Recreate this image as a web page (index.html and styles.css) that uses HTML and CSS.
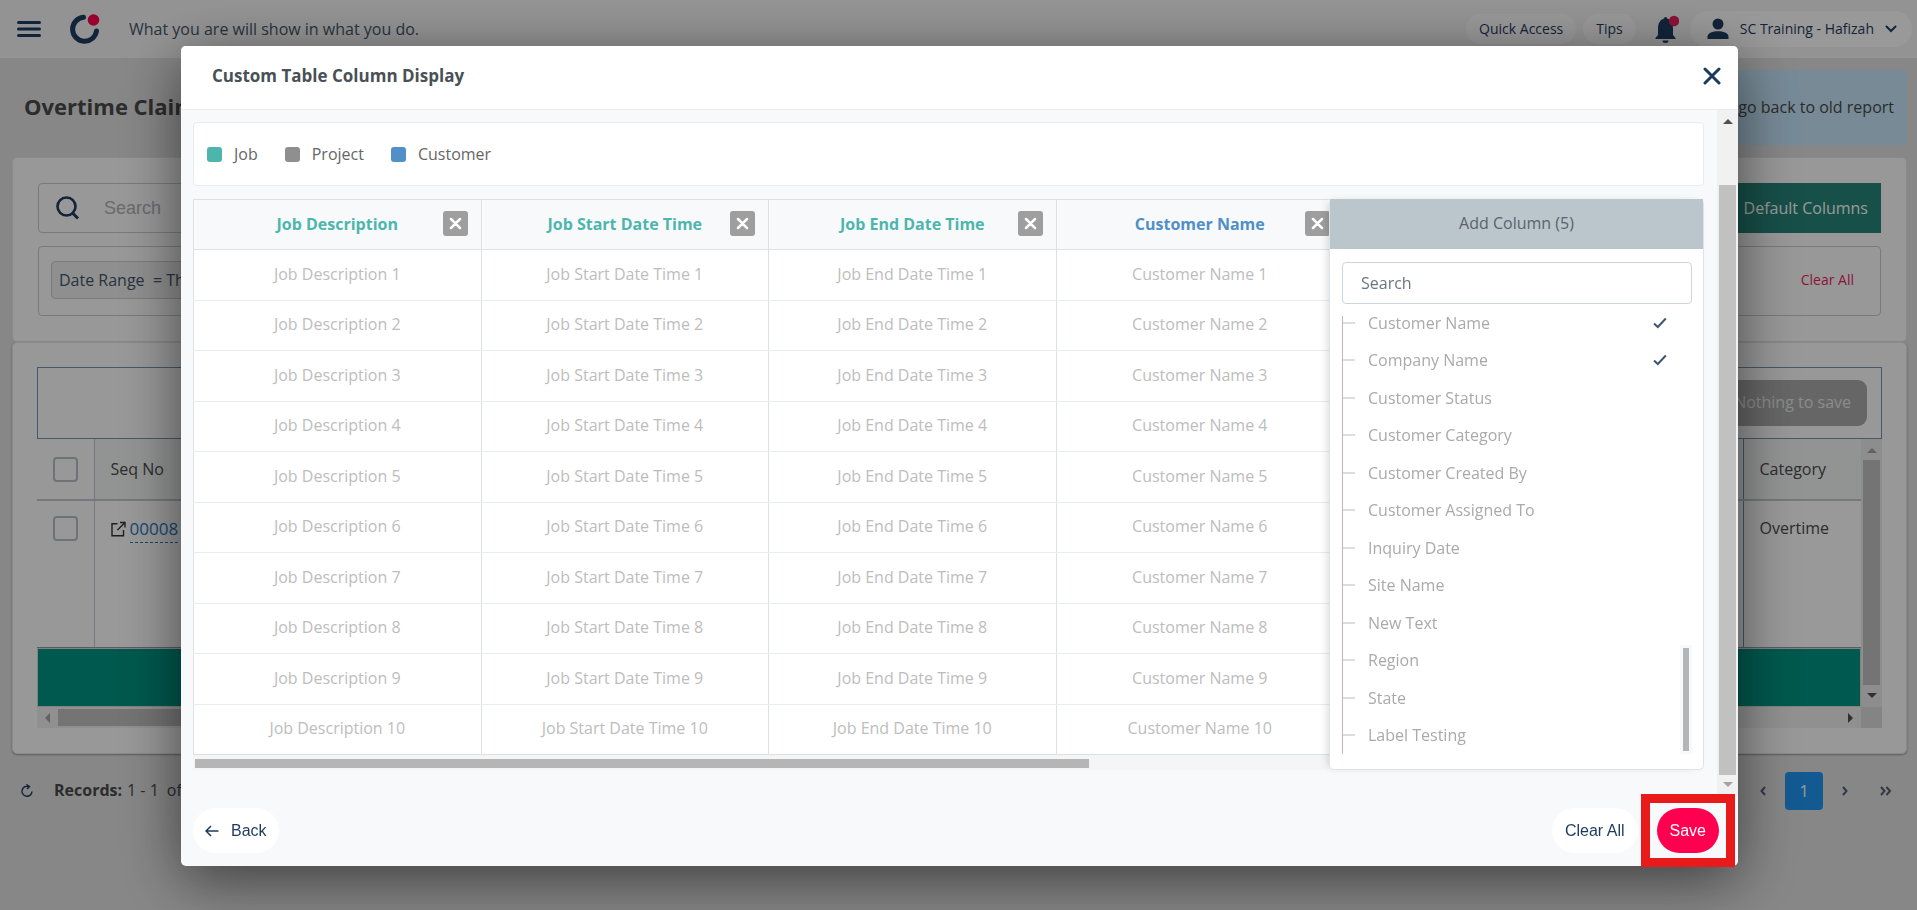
FILE: index.html
```html
<!DOCTYPE html>
<html lang="en">
<head>
<meta charset="utf-8">
<meta name="viewport" content="width=device-width, initial-scale=1">
<title>Custom Table Column Display</title>
<link rel="stylesheet" href="styles.css">
</head>
<body>
<div class="page">
  <header class="topbar">
    <button class="icon-btn" aria-label="Menu"><svg width="24" height="18" viewBox="0 0 24 18"><path d="M1.500 2.500h21M1.500 9h21M1.500 15.500h21" stroke="#1f3c61" stroke-width="3" stroke-linecap="round"/></svg></button>
    <svg class="logo" width="32" height="32" viewBox="0 0 32 32"><path d="M14.500 4.300A12 12 0 1 0 27.500 18" fill="none" stroke="#1f3c61" stroke-width="5" stroke-linecap="round"/><circle cx="24.500" cy="7" r="5.800" fill="#ff004b"/></svg>
    <p class="quote">What you are will show in what you do.</p>
    <nav class="top-actions">
      <button class="pill">Quick Access</button>
      <button class="pill">Tips</button>
      <button class="bell" aria-label="Notifications"><svg width="26" height="30" viewBox="0 0 26 30"><path d="M11 4.500a1.600 1.600 0 0 1 3.200 0C19 6 20 10 20 14.500V21l2.500 3v1h-20v-1L5 21v-6.500C5 10 6.500 6 11 4.500zM9.500 26.500h6a3 2.500 0 0 1-6 0z" fill="#1f3c61"/><circle cx="21" cy="7" r="5.200" fill="#e91e5f"/></svg></button>
      <button class="pill user"><svg width="22" height="22" viewBox="0 0 22 22"><circle cx="11" cy="6" r="5.500" fill="#1f3c61"/><path d="M.500 21v-2.500C.500 15 6 13.300 11 13.300s10.500 1.700 10.500 5.200V21z" fill="#1f3c61"/></svg><span>SC Training - Hafizah</span><svg width="12" height="8" viewBox="0 0 12 8"><path d="M1.500 1.500 6 6l4.500-4.500" fill="none" stroke="#1f3c61" stroke-width="2" stroke-linecap="round"/></svg></button>
    </nav>
  </header>

  <main class="content">
    <div class="title-row">
      <h1>Overtime Claim</h1>
      <a class="old-link" href="#">go back to old report</a>
    </div>

    <section class="card filters">
      <div class="filter-top">
        <label class="searchbox"><svg width="24" height="24" viewBox="0 0 24 24"><circle cx="10.500" cy="10.500" r="9" fill="none" stroke="#1f3c61" stroke-width="2.600"/><path d="m16.500 17 5.500 5.500" stroke="#1f3c61" stroke-width="3"/></svg><input type="text" placeholder="Search" aria-label="Search report"></label>
        <button class="default-cols">Default Columns</button>
      </div>
      <div class="filter-box">
        <span class="chip">Date Range&nbsp; = This</span>
        <button class="clear-link">Clear All</button>
      </div>
    </section>

    <section class="card report">
      <div class="save-strip"><button class="nothing" disabled>Nothing to save</button></div>
      <div class="grid-wrap">
        <div class="grid-main">
          <table class="report-table">
            <thead><tr><th class="sel"><input type="checkbox" aria-label="Select all"></th><th>Seq No</th><th class="cat">Category</th></tr></thead>
            <tbody><tr><td class="sel"><input type="checkbox" aria-label="Select record"></td>
            <td><svg class="ext" width="15" height="16" viewBox="0 0 15 16"><path d="M6.500 2.800H1v12h11.500V9M9 1.500h5v5M13.500 2 6.500 9" fill="none" stroke="#333" stroke-width="1.400"/></svg><a class="seq" href="#">00008</a></td><td class="cat">Overtime</td></tr></tbody>
          </table>
          <div class="total-bar"></div>
        </div>
        <div class="vbar"><i class="arrow up dim"></i><span class="vthumb"></span><i class="arrow down"></i></div>
        <div class="hbar"><i class="arrow left dim"></i><span class="hthumb"></span><i class="arrow right"></i></div>
        <div class="corner"></div>
      </div>
    </section>

    <div class="pager">
      <button class="icon-btn" aria-label="Refresh"><svg width="14" height="14" viewBox="0 0 14 14"><path d="M8.500 2.500A5 5 0 1 0 12 7.500M6.500.500l3 2-2.500 2.500" fill="none" stroke="#1f3c61" stroke-width="1.400"/></svg></button>
      <p class="records"><b>Records:</b><span>1 - 1</span><span>of</span></p>
      <nav class="pages">
        <button aria-label="Previous page"><svg width="6" height="10" viewBox="0 0 6 10"><path d="M5 1 1.500 5 5 9"/></svg></button>
        <button class="current">1</button>
        <button aria-label="Next page"><svg width="6" height="10" viewBox="0 0 6 10"><path d="m1 1 3.500 4L1 9"/></svg></button>
        <button aria-label="Last page"><svg width="12" height="10" viewBox="0 0 12 10"><path d="m1 1 3.500 4L1 9m5.500-8L10 5 6.500 9"/></svg></button>
      </nav>
    </div>
  </main>
</div>

<div class="overlay">
  <div class="modal" role="dialog" aria-labelledby="dialog-title">
    <header class="modal-head">
      <h2 id="dialog-title">Custom Table Column Display</h2>
      <button class="icon-btn" aria-label="Close"><svg width="18" height="18" viewBox="0 0 18 18"><path d="m2 2 14 14M16 2 2 16" stroke="#1c3a5e" stroke-width="3" stroke-linecap="round"/></svg></button>
    </header>
    <div class="modal-mid">
      <div class="modal-body">
        <ul class="legend"><li><i class="job"></i>Job</li><li><i class="project"></i>Project</li><li><i class="customer"></i>Customer</li></ul>
        <div class="workspace">
          <div class="preview">
            <table class="preview-table">
              <thead><tr id="heads"></tr></thead>
              <tbody id="rows"></tbody>
            </table>
            <div class="preview-bar"><span></span></div>
          </div>
          <aside class="add-panel">
            <h3>Add Column (5)</h3>
            <div class="add-body">
              <input class="col-search" type="text" placeholder="Search" aria-label="Search columns">
              <div class="col-scroll">
                <ul class="col-list" id="cols"></ul>
                <div class="mini-bar"><span></span></div>
              </div>
            </div>
          </aside>
        </div>
      </div>
      <div class="modal-bar"><i class="arrow up"></i><span></span><i class="arrow down dim"></i></div>
    </div>
    <footer class="modal-foot">
      <button class="round"><svg width="14" height="12" viewBox="0 0 14 12"><path d="M13.500 6H1M6 1 1 6l5 5" fill="none" stroke="#1c3a5e" stroke-width="1.500"/></svg>Back</button>
      <div class="foot-right">
        <button class="round">Clear All</button>
        <div class="marker"><button class="round save">Save</button></div>
      </div>
    </footer>
  </div>
</div>
<script src="app.js"></script>
</body>
</html>
```
FILE: styles.css
```css
* { box-sizing: border-box; }
body { margin: 0; font-family: "Open Sans", "Noto Sans", sans-serif; font-size: 16px; line-height: 24px; color: #4a4a4a; background: #e1e1e1; }
button { font: inherit; color: inherit; background: none; border: 0; padding: 0; }
input { font: inherit; margin: 0; }
h1, h2, h3, p, ul { margin: 0; padding: 0; }
ul { list-style: none; }
a { text-decoration: none; }
svg { display: block; flex: none; }
table { border-collapse: collapse; }

.page { height: 100vh; overflow: hidden; }
.icon-btn { display: flex; }
.topbar { display: flex; align-items: center; height: 58px; padding: 0 5px 0 17px; background: #f6f6f6; }
.logo { margin-left: 28px; }
.quote { margin-left: 28px; color: #44566c; }
.top-actions { display: flex; align-items: center; margin-left: auto; gap: 7px; font-size: 14px; color: #1f3c61; }
.pill { height: 30px; padding: 0 13px; border-radius: 18px; background: #fff; }
.bell { margin: 0 4px 0 10px; }
.user { display: flex; align-items: center; gap: 11px; height: 36px; padding: 0 15px 0 17px; }

.content { padding: 12px 10px 0 12px; }
.title-row { display: flex; align-items: center; justify-content: space-between; height: 75px; padding-left: 12px; }
.title-row h1 { padding-bottom: 4px; font-size: 22px; line-height: 32px; }
.old-link { display: flex; align-items: center; justify-content: flex-end; width: 420px; height: 75px; padding: 0 13px 2px 0; background: #c6e6fb; color: #4a4a4a; }
.card { background: #fdfdfd; border: 1px solid #e6e6e6; border-radius: 5px; padding: 25px; }
.filters { margin-top: 12px; height: 185px; }
.filter-top { display: flex; justify-content: space-between; height: 50px; }
.searchbox { display: flex; align-items: center; gap: 22px; width: 600px; padding-left: 17px; border: 1px solid #c8ccd0; border-radius: 4px; }
.searchbox input { width: 300px; border: 0; outline: 0; background: none; font-family: "Liberation Sans", Arial, sans-serif; font-size: 18px; }
.searchbox input::placeholder { color: #b2b2b2; opacity: 1; }
.default-cols { padding: 0 13px; background: #268579; color: #fff; font-weight: 500; }
.filter-box { display: flex; justify-content: space-between; align-items: center; height: 70px; margin-top: 13px; padding: 0 26px 2px 12px; border: 1px solid #c8ccd0; border-radius: 4px; }
.chip { width: 300px; padding: 6px 7px; border: 1px solid #cdcdcd; border-radius: 4px; background: #efefef; color: #44566c; }
.clear-link { font-size: 14px; color: #e91e5f; }
.report { height: 412px; padding: 24px; box-shadow: 0 1px 2px #999; }
.save-strip { display: flex; align-items: center; justify-content: flex-end; height: 72px; padding-right: 14px; border: 1px solid #7695ac; }
.nothing { height: 46px; padding: 0 16px 2px; border-radius: 9px; background: #aaabaa; color: #e8e8e8; font-weight: 500; }
.grid-wrap { display: grid; grid-template: 268px 21px / 1fr 21px; }
.grid-main { overflow: hidden; }
.report-table { width: 100%; table-layout: fixed; }
.report-table th { height: 61px; padding: 0 16px; text-align: left; font-weight: 400; background: #f4f6f6; border-bottom: 2px solid #c3cad1; border-left: 1px solid #c3cad1; }
.report-table td { height: 147px; padding: 15px 16px; vertical-align: top; background: #fff; border-left: 1px solid #c3cad1; border-bottom: 1px solid #999; }
.report-table .sel { width: 57px; border-left: 0; background: #fdfdfd; }
.report-table .cat { width: 118px; border-left-color: #7695ac; }
.report-table input { display: block; appearance: none; width: 25px; height: 25px; border: 2px solid #b9bec6; border-radius: 4px; }
.ext { display: inline-block; vertical-align: -2px; margin-right: 4px; }
.seq { display: inline-block; font-size: 17px; line-height: 26px; color: #2478c0; border-bottom: 1px dashed #2478c0; }
.total-bar { height: 59px; background: #009482; border: 1px solid #d5dadd; }
.vbar, .hbar { display: flex; align-items: center; justify-content: space-between; background: #f1f1f1; }
.vbar { flex-direction: column; padding: 9px 0; background: #ececec; }
.vthumb { flex: 1; width: 17px; margin: 7px 0 8px; background: #c1c1c1; }
.hbar { padding: 0 8px; }
.hthumb { width: 50%; height: 17px; margin: 0 auto 0 8px; background: #c1c1c1; }
.corner { background: #dcdcdc; }
.arrow { width: 0; height: 0; border: 5px solid transparent; }
.arrow.up { border-top: 0; border-bottom-color: #505050; }
.arrow.down { border-bottom: 0; border-top-color: #505050; }
.arrow.left { border-left: 0; border-right-color: #505050; }
.arrow.right { border-right: 0; border-left-color: #505050; }
.arrow.up.dim { border-bottom-color: #a3a3a3; }
.arrow.down.dim { border-top-color: #a3a3a3; }
.arrow.left.dim { border-right-color: #a3a3a3; }
.pager { display: flex; align-items: center; height: 38px; margin-top: 18px; padding-left: 8px; }
.records { display: flex; gap: 5px; margin-left: 20px; padding-bottom: 2px; }
.records span + span { margin-left: 3px; }
.pages { display: flex; align-items: center; gap: 19px; margin-left: auto; padding-right: 15px; }
.pages svg { fill: none; stroke: #555e70; stroke-width: 2; }
.pages button + button:last-child { margin-left: 13px; }
.pages .current { width: 38px; height: 38px; border-radius: 4px; background: #2196f3; color: #fff; }

.overlay { position: fixed; inset: 0; padding: 46px 179px 0 181px; background: rgba(0, 0, 0, .4); }
.modal { background: #f8f9fb; border-radius: 5px; box-shadow: 0 14px 60px rgba(0, 0, 0, .55); }
.modal-head { display: flex; align-items: center; justify-content: space-between; height: 64px; padding: 10px 17px 14px 31px; background: #fff; border-bottom: 1px solid #e9ecef; border-radius: 5px 5px 0 0; }
.modal-head h2 { font-size: 17px; line-height: 24px; color: #495057; }
.modal-mid { display: flex; }
.modal-body { flex: 1; min-width: 0; padding: 12px 13px 25px 12px; }
.legend { display: flex; align-items: center; gap: 27px; height: 64px; padding-left: 13px; background: #fff; border: 1px solid #e9ecef; border-radius: 4px; color: #666; }
.legend li { display: flex; align-items: center; gap: 12px; }
.legend i { width: 15px; height: 15px; border-radius: 3px; }
.job { background: #4db6ac; }
.project { background: #8f8f8f; }
.customer { background: #508fc7; }
.workspace { display: flex; height: 571px; margin-top: 13px; }
.preview { flex: 1; min-width: 0; overflow: hidden; }
.preview-table { width: 1151px; height: 556px; table-layout: fixed; background: #fff; }
.preview-table th, .preview-table td { padding: 0 0 2px; text-align: center; border: 1px solid #dce1e5; }
.preview-table td { border-top-color: #e9ecef; border-bottom-color: #e9ecef; color: #bdbdbd; }
.preview-table tr:last-child td { border-bottom-color: #dce1e5; }
.preview-table th { height: 50px; background: #f8f9fb; }
.head-cell { display: grid; grid-template-columns: 25px 1fr 25px; align-items: center; padding: 0 13px; }
.head-cell.job-text { color: #4db6ac; }
.head-cell.customer-text { color: #508fc7; }
.remove { grid-column: 3; display: grid; place-items: center; height: 25px; border-radius: 3px; background: #9e9e9e; }
.head-cell span { grid-column: 2; }
.preview-bar { height: 15px; padding: 4px 2px; background: #f5f5f5; }
.preview-bar span { display: block; width: 79%; height: 9px; background: #b5b5b5; }
.add-panel { z-index: 1; width: 375px; display: flex; flex-direction: column; background: #fff; border: 1px solid #dce4e8; border-top: 0; border-radius: 5px; box-shadow: -4px 0 10px -4px rgba(0, 0, 0, .2); }
.add-panel h3 { height: 50px; line-height: 48px; text-align: center; font-size: 16px; font-weight: 400; color: #5a626b; background: #bbc6cc; }
.add-body { flex: 1; padding: 13px 11px 15px 12px; }
.col-search { display: block; width: 100%; height: 42px; padding: 0 18px; border: 1px solid #ced4da; border-radius: 4px; outline: 0; }
.col-search::placeholder { color: #6c757d; opacity: 1; }
.col-scroll { display: flex; justify-content: space-between; align-items: flex-end; height: 438px; margin-top: 12px; overflow: hidden; }
.col-list { display: grid; grid-template-rows: repeat(12, 1fr); height: 450px; width: 325px; border-left: 1px solid #bbb; color: #aaa; line-height: 16px; }
.col-list li { display: flex; align-items: center; gap: 13px; }
.col-list li::before { content: ""; width: 12px; height: 2px; background: #ddd; }
.col-list svg { margin-left: auto; }
.mini-bar { width: 12px; height: 109px; padding: 3px; background: #f8f9fb; }
.mini-bar span { display: block; height: 100%; background: #b5b5b5; }
.modal-bar { display: flex; flex-direction: column; align-items: center; width: 21px; padding: 9px 0 8px; background: #f1f1f1; }
.modal-bar span { width: 17px; margin: 61px 0 7px; flex: 1; background: #c1c1c1; }
.modal-foot { display: flex; align-items: center; justify-content: space-between; height: 71px; padding: 0 3px 0 12px; }
.foot-right { display: flex; align-items: center; gap: 3px; }
.round { display: flex; align-items: center; gap: 12px; height: 45px; padding: 0 12px; border-radius: 23px; background: #fff; color: #1c3a5e; font-family: "Liberation Sans", Arial, sans-serif; }
.foot-right .round { padding: 0 13px; }
.marker { padding: 5px 7px; border: 9px solid #e81a1a; }
.foot-right .save { background: #ff0050; color: #fff; }
```
FILE: app.js
```js
const columns = [
  ["Job Description", "job-text"],
  ["Job Start Date Time", "job-text"],
  ["Job End Date Time", "job-text"],
  ["Customer Name", "customer-text"]
];
const cross = '<svg width="13" height="13" viewBox="0 0 13 13"><path d="m2 2 9 9m0-9-9 9" stroke="#fff" stroke-width="2.500" stroke-linecap="round"/></svg>';
document.getElementById("heads").innerHTML = columns.map(([name, tone]) =>
  `<th><div class="head-cell ${tone}"><span>${name}</span><button class="remove" aria-label="Remove ${name}">${cross}</button></div></th>`).join("");
document.getElementById("rows").innerHTML = Array.from({ length: 10 }, (_, i) =>
  "<tr>" + columns.map(([name]) => `<td>${name} ${i + 1}</td>`).join("") + "</tr>").join("");

const tick = '<svg width="14" height="12" viewBox="0 0 14 12"><path d="M1 6.500 4.800 10 12.800 1.500" fill="none" stroke="#3e5676" stroke-width="2"/></svg>';
const fields = ["Customer Name", "Company Name", "Customer Status", "Customer Category", "Customer Created By",
  "Customer Assigned To", "Inquiry Date", "Site Name", "New Text", "Region", "State", "Label Testing"];
document.getElementById("cols").innerHTML = fields.map((f, i) => `<li>${f}${i < 2 ? tick : ""}</li>`).join("");
```
